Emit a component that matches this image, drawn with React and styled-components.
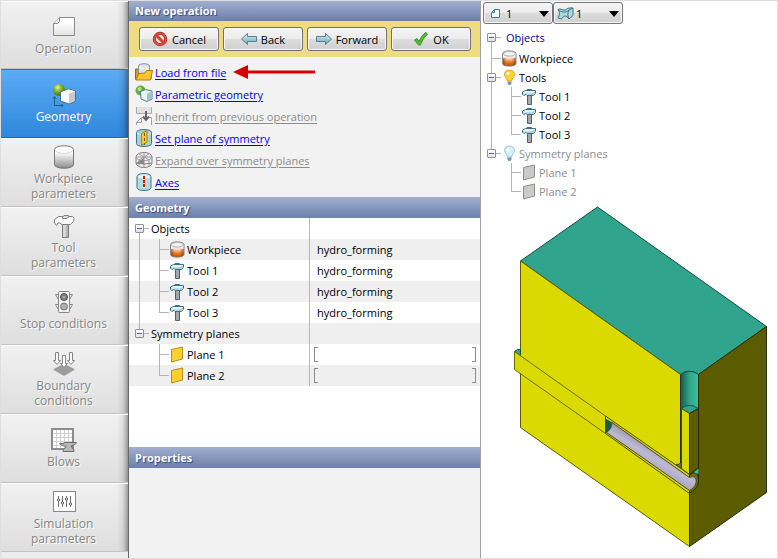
import { useState } from "react";
import styled, { createGlobalStyle } from "styled-components";

const steps = [
  { label: "Operation", icon: <SheetIcon /> },
  { label: "Geometry", icon: <GeometryIcon /> },
  { label: "Workpiece parameters", icon: <CylinderIcon /> },
  { label: "Tool parameters", icon: <BigHammerIcon /> },
  { label: "Stop conditions", icon: <TrafficIcon /> },
  { label: "Boundary conditions", icon: <BoundaryIcon /> },
  { label: "Blows", icon: <BlowsIcon /> },
  { label: "Simulation parameters", icon: <SlidersIcon /> },
];

const actions = [
  { label: "Load from file", icon: <FolderIcon />, arrow: true },
  { label: "Parametric geometry", icon: <ParametricIcon /> },
  { label: "Inherit from previous operation", icon: <InheritIcon />, disabled: true },
  { label: "Set plane of symmetry", icon: <SymmetryIcon /> },
  { label: "Expand over symmetry planes", icon: <ExpandIcon />, disabled: true },
  { label: "Axes", icon: <AxesIcon /> },
];

const geometryRows = [
  { label: "Objects", box: "first" },
  { label: "Workpiece", icon: <WorkpieceIcon />, guides: ["line", "tee"], value: "hydro_forming" },
  { label: "Tool 1", icon: <HammerIcon />, guides: ["line", "tee"], value: "hydro_forming" },
  { label: "Tool 2", icon: <HammerIcon />, guides: ["line", "tee"], value: "hydro_forming" },
  { label: "Tool 3", icon: <HammerIcon />, guides: ["line", "elbow"], value: "hydro_forming" },
  { label: "Symmetry planes", box: "last" },
  { label: "Plane 1", icon: <PlaneIcon />, guides: ["none", "tee"], range: true },
  { label: "Plane 2", icon: <PlaneIcon />, guides: ["none", "elbow"], range: true },
];

const sceneRows = [
  { label: "Workpiece", icon: <WorkpieceIcon />, guides: ["tee"] },
  { label: "Tools", icon: <BulbIcon on />, box: "middle" },
  { label: "Tool 1", icon: <HammerIcon />, guides: ["line", "tee"] },
  { label: "Tool 2", icon: <HammerIcon />, guides: ["line", "tee"] },
  { label: "Tool 3", icon: <HammerIcon />, guides: ["line", "elbow"] },
  { label: "Symmetry planes", icon: <BulbIcon />, box: "last", muted: true },
  { label: "Plane 1", icon: <PlaneIcon muted />, guides: ["none", "tee"], muted: true },
  { label: "Plane 2", icon: <PlaneIcon muted />, guides: ["none", "elbow"], muted: true },
];

export default function App() {
  const [step, setStep] = useState("Geometry");

  return (
    <>
      <GlobalStyle />
      <Page>
        <Sidebar>
          {steps.map(({ label, icon }) => (
            <Step
              key={label}
              type="button"
              $active={label === step}
              onClick={() => setStep(label)}
            >
              <StepIcon>{icon}</StepIcon>
              <StepLabel>{label}</StepLabel>
            </Step>
          ))}
        </Sidebar>

        <Panel>
          <PanelHeading>New operation</PanelHeading>
          <ButtonBar>
            <BarButton type="button">
              <CancelIcon />
              Cancel
            </BarButton>
            <BarButton type="button">
              <ArrowIcon />
              Back
            </BarButton>
            <BarButton type="button">
              <ArrowIcon forward />
              Forward
            </BarButton>
            <BarButton type="button">
              <CheckIcon />
              OK
            </BarButton>
          </ButtonBar>

          <ActionList>
            {actions.map(({ label, icon, disabled, arrow }) => (
              <ActionItem key={label}>
                {icon}
                <ActionLink href="#" aria-disabled={disabled} $disabled={disabled}>
                  {label}
                </ActionLink>
                {arrow ? <PointerArrow /> : null}
              </ActionItem>
            ))}
          </ActionList>

          <PanelHeading>Geometry</PanelHeading>
          <TableArea>
            <Table>
              <tbody>
                {geometryRows.map((row) => (
                  <tr key={row.label}>
                    <NameCell>
                      <TreeRow row={row} />
                    </NameCell>
                    <ValueCell $range={row.range}>
                      {row.range ? (
                        <Range>
                          <Bracket />
                          <Bracket $right />
                        </Range>
                      ) : (
                        row.value
                      )}
                    </ValueCell>
                  </tr>
                ))}
              </tbody>
            </Table>
          </TableArea>

          <PanelHeading>Properties</PanelHeading>
          <PropertiesBody />
        </Panel>

        <Viewport>
          <Toolbar>
            <Picker>
              <SmallSheetIcon />
              <PickerSelect aria-label="Operation number" defaultValue="1">
                <option>1</option>
              </PickerSelect>
              <Caret />
            </Picker>
            <Picker $tight>
              <BlowShapeIcon />
              <PickerSelect aria-label="Blow number" defaultValue="1">
                <option>1</option>
              </PickerSelect>
              <Caret />
            </Picker>
          </Toolbar>
          <SceneRoot>
            <Guide $type="first">
              <Expander />
            </Guide>
            <RootLabel>Objects</RootLabel>
          </SceneRoot>
          <SceneTree>
            {sceneRows.map((row) => (
              <SceneItem key={row.label}>
                <TreeRow row={row} />
              </SceneItem>
            ))}
          </SceneTree>
          <Model />
        </Viewport>
      </Page>
    </>
  );
}

function TreeRow({ row }) {
  return (
    <TreeLine>
      {row.box ? (
        <Guide $type={row.box}>
          <Expander />
        </Guide>
      ) : (
        row.guides.map((type, index) => <Guide key={index} $type={type} />)
      )}
      {row.icon ? <TreeIcon>{row.icon}</TreeIcon> : null}
      <TreeLabel $muted={row.muted}>{row.label}</TreeLabel>
    </TreeLine>
  );
}

function Expander() {
  return (
    <ExpanderButton type="button" aria-label="Collapse">
      <svg width="7" height="7" viewBox="0 0 7 7">
        <path d="M1 3h5v1H1z" fill="#4a62a8" />
      </svg>
    </ExpanderButton>
  );
}

/* Step icons */

function SheetIcon() {
  return (
    <svg width="24" height="24" viewBox="0 0 24 24">
      <defs>
        <linearGradient id="sheet" x2="0" y2="1">
          <stop offset="0.3" stopColor="#fff" />
          <stop offset="1" stopColor="#e2e2e2" />
        </linearGradient>
      </defs>
      <path d="M7.5 2.5H22.5V20.5H1.5V8.5Z" fill="url(#sheet)" stroke="#8a8a8a" />
      <path d="M7.5 2.5V6.5L5.5 8.5H1.5" fill="#eee" stroke="#8a8a8a" />
    </svg>
  );
}

function GeometryIcon() {
  return (
    <svg width="24" height="24" viewBox="0 0 24 24">
      <defs>
        <radialGradient id="ball" cx="0.4" cy="0.3" r="0.7">
          <stop offset="0" stopColor="#e4f59a" />
          <stop offset="0.45" stopColor="#86b52c" />
          <stop offset="1" stopColor="#3e7408" />
        </radialGradient>
      </defs>
      <circle cx="7" cy="7" r="6" fill="url(#ball)" />
      <path d="M8.500 9L16.500 6L23.500 8V18L17 21L8.500 18Z" fill="#fff" stroke="#4c707c" />
      <path d="M17 10.500V20.500L23 17.700V8.500Z" fill="#c9c9c9" />
      <path d="M9 9.300L16.500 6.500L23 8.300L17 10.500Z" fill="#f4f4f4" />
      <path d="M2.500 14V22.500H11M1 15.500L2.500 13.500L4 15.500M9.500 21L11 22.500L9.500 24" fill="none" stroke="#1f5e78" />
    </svg>
  );
}

function CylinderIcon() {
  return (
    <svg width="24" height="24" viewBox="0 0 24 24">
      <defs>
        <linearGradient id="cylinder" x2="0" y2="1">
          <stop offset="0.3" stopColor="#fff" />
          <stop offset="1" stopColor="#8b8b8b" />
        </linearGradient>
      </defs>
      <path d="M2.500 4.500C2.500 -0.500 21.500 -0.500 21.500 4.500V19.500C21.500 24.500 2.500 24.500 2.500 19.500Z" fill="url(#cylinder)" stroke="#777" />
      <path d="M3 5C4 9.500 20 9.500 21 5" fill="none" stroke="#d5d5d5" />
    </svg>
  );
}

function BigHammerIcon() {
  return (
    <svg width="24" height="24" viewBox="0 0 24 24">
      <path d="M10.500 10V23.500H16.500V10Z" fill="#d6d6d6" stroke="#7d7d7d" />
      <path d="M14 11H16V23H14Z" fill="#b5b5b5" />
      <path d="M6.500 2.500H20C22.500 2.500 22 6 21.500 7.500L18.500 10.500H10L8 9H6L4.500 11.500L2.500 9V5.500Z" fill="#fafafa" stroke="#808080" />
      <path d="M10.500 3L12 1.500H16.500V3L15 4.500H10.500Z" fill="#ddd" stroke="#808080" />
    </svg>
  );
}

function TrafficIcon() {
  return (
    <svg width="24" height="24" viewBox="0 0 24 24">
      <path d="M3.500 4.500H7V9H6Z M20.500 4.500H17V9H18Z M3.500 14.500H7V19H6Z M20.500 14.500H17V19H18Z" fill="#f4f4f4" stroke="#888" />
      <rect x="6.500" y="1.500" width="11" height="21" rx="1" fill="#f2f2f2" stroke="#858585" />
      <circle cx="12" cy="7" r="3.500" fill="#777" stroke="#555" />
      <circle cx="12" cy="7" r="1.500" fill="#aaa" />
      <circle cx="12" cy="16.500" r="3.500" fill="#b0b0b0" stroke="#777" />
    </svg>
  );
}

function BoundaryIcon() {
  return (
    <svg width="24" height="24" viewBox="0 0 24 24">
      <path d="M1 17.500L12 11.500L23 17.500L12 24Z" fill="#9c9c9c" />
      <g fill="#fff" stroke="#868686">
        <path d="M3.500 0.500H6.500V8.500H8.500L5 12.500L1.500 8.500H3.500Z" />
        <path d="M17.500 0.500H20.500V8.500H22.500L19 12.500L15.500 8.500H17.500Z" />
        <path d="M10.500 3.500H13.500V11.500H15.500L12 15.500L8.500 11.500H10.500Z" />
      </g>
    </svg>
  );
}

function BlowsIcon() {
  return (
    <svg width="26" height="24" viewBox="0 0 26 24">
      <rect x="1" y="1" width="21" height="20" fill="#fff" stroke="#8c8c8c" strokeWidth="2" />
      <path d="M5.500 2V20M9.500 2V20M13.500 2V20M17.500 2V20M2 5.500H21M2 9.500H21M2 13.500H21M2 17.500H21" stroke="#d2d2d2" />
      <path d="M8.500 15.500H13V14.500H25.500C24.500 17 22 17 20.500 17.500V19L23 22V23.500H12V22L15 19V18C12 18 10 17.500 8.500 15.500Z" fill="#b8b8b8" stroke="#6f6f6f" />
    </svg>
  );
}

function SlidersIcon() {
  return (
    <svg width="24" height="24" viewBox="0 0 24 24">
      <rect x="1.500" y="1.500" width="22" height="20" fill="#fdfdfd" stroke="#878787" />
      <path d="M6.500 6V17M10.500 6V17M14.500 6V17M18.500 6V17" stroke="#707070" />
      <g fill="#fff" stroke="#555">
        <circle cx="6.500" cy="10" r="1.200" />
        <circle cx="10.500" cy="13" r="1.200" />
        <circle cx="14.500" cy="9" r="1.200" />
        <circle cx="18.500" cy="14" r="1.200" />
      </g>
    </svg>
  );
}

/* Button icons */

function CancelIcon() {
  return (
    <svg width="16" height="16" viewBox="0 0 16 16">
      <circle cx="8" cy="8" r="5.700" fill="#f1dcd8" stroke="#8e2a20" strokeWidth="3" />
      <circle cx="8" cy="8" r="5.700" fill="none" stroke="#dd4a3b" strokeWidth="2" />
      <path d="M4 4L12 12" stroke="#d23f32" strokeWidth="3" />
    </svg>
  );
}

function ArrowIcon({ forward }) {
  return (
    <svg width="16" height="16" viewBox="0 0 16 16">
      <defs>
        <linearGradient id="arrow" x2="0" y2="1">
          <stop offset="0" stopColor="#e2f3f4" />
          <stop offset="1" stopColor="#5fa6b2" />
        </linearGradient>
      </defs>
      <path
        d={forward ? "M0.500 5.500H9.500V2.500L15.500 8L9.500 13.500V10.500H0.500Z" : "M15.500 5.500H6.500V2.500L0.500 8L6.500 13.500V10.500H15.500Z"}
        fill="url(#arrow)"
        stroke="#54818f"
      />
    </svg>
  );
}

function CheckIcon() {
  return (
    <svg width="16" height="16" viewBox="0 0 16 16">
      <path d="M1.500 9L4 7.500L6 10.500C8 6 10 3 13 1.500L14.500 3.500C11 6 9 10 7.500 14H5.500Z" fill="#55b83c" stroke="#3a9a2a" />
    </svg>
  );
}

/* Action icons */

function FolderIcon() {
  return (
    <svg width="18" height="18" viewBox="0 0 18 18">
      <path d="M0.500 16.500V6H6L7 8H16V16Z" fill="#d9971c" stroke="#9b6b12" />
      <path d="M3.500 3C3.500 0 14.500 0 14.500 3V11H3.500Z" fill="#dfe3e6" stroke="#82929b" />
      <path d="M4 4C5 6 13 6 14 4" fill="none" stroke="#fff" />
      <path d="M1 17L4 10.500L10 10L11.500 7.500H17.500L15.500 17Z" fill="#fbc62b" stroke="#b37d12" />
    </svg>
  );
}

function ParametricIcon() {
  return (
    <svg width="18" height="18" viewBox="0 0 18 18">
      <circle cx="5.500" cy="5.500" r="5" fill="#67ad3e" />
      <circle cx="4.500" cy="4" r="2" fill="#b9df9f" />
      <path d="M5.500 6.500L10.500 4.500L17 6V14L12 16.500L6 14Z" fill="#e7f3f5" stroke="#4f7f8c" />
      <path d="M12 8.500V16L16.500 13.500V6.500Z" fill="#9fc5cc" />
    </svg>
  );
}

function InheritIcon() {
  return (
    <svg width="18" height="18" viewBox="0 0 18 18">
      <path d="M1 0V6.500H16.500V0Z" fill="#e2e2e2" />
      <path d="M1.500 0V6.500H16.500V0" fill="none" stroke="#aaa" />
      <path d="M6.500 10.500H16.500V18M1.500 18V15.500L6.500 10.500V15.500H1.500" fill="#fafafa" stroke="#a2a2a2" />
      <path d="M11 4V12M8 9.500L11 13L14 9.500" fill="none" stroke="#666" strokeWidth="2" />
    </svg>
  );
}

function SymmetryIcon() {
  return (
    <svg width="18" height="18" viewBox="0 0 18 18">
      <path d="M1.500 3.500C1.500 -0.500 16.500 -0.500 16.500 3.500V14.500C16.500 18.500 1.500 18.500 1.500 14.500Z" fill="#a9d0d6" stroke="#39788a" />
      <path d="M2 4C4 6.500 14 6.500 16 4" fill="none" stroke="#dff0f2" />
      <path d="M6.500 4.500L12 1.500V13L6.500 16.500Z" fill="#fdc62f" stroke="#a97e1b" />
      <path d="M9.500 4V16" stroke="#7a5a16" strokeDasharray="3 2" />
    </svg>
  );
}

function ExpandIcon() {
  return (
    <svg width="18" height="18" viewBox="0 0 18 18">
      <path d="M1 6C1 0 17 0 17 6V12C17 18 1 18 1 12Z" fill="#f0f0f0" stroke="#808080" />
      <path d="M1 6C2 11 16 11 17 6M1 6H17M9 1.500V17M4 3L14 9M14 3L4 9M4 9V15M14 9V15" fill="none" stroke="#9a9a9a" />
      <path d="M1 12L9 7V13Z" fill="#8a8a8a" />
      <path d="M1 12L9 13L17 12" fill="none" stroke="#808080" />
    </svg>
  );
}

function AxesIcon() {
  return (
    <svg width="18" height="18" viewBox="0 0 18 18">
      <path d="M2 3.500C2 -0.500 16 -0.500 16 3.500V14.500C16 18.500 2 18.500 2 14.500Z" fill="#b8d9de" stroke="#39788a" />
      <ellipse cx="9" cy="3.500" rx="6" ry="2" fill="#eaf6f7" />
      <path d="M9 3V15" stroke="#c91d12" strokeWidth="2" strokeDasharray="3 1" />
    </svg>
  );
}

function PointerArrow() {
  return (
    <PointerSvg width="82" height="16" viewBox="0 0 82 16">
      <path d="M0 8L15 1V6.500H82V9.500H15V15Z" fill="#d20000" />
    </PointerSvg>
  );
}

/* Tree icons */

function WorkpieceIcon() {
  return (
    <svg width="15" height="17" viewBox="0 0 15 17">
      <defs>
        <linearGradient id="hot" x2="0" y2="1">
          <stop offset="0.300" stopColor="#fff" />
          <stop offset="0.500" stopColor="#f5d3bd" />
          <stop offset="0.750" stopColor="#ea7a22" />
          <stop offset="1" stopColor="#b44c08" />
        </linearGradient>
        <linearGradient id="hotSide">
          <stop offset="0" stopColor="#7c3100" stopOpacity="0.600" />
          <stop offset="0.300" stopColor="#7c3100" stopOpacity="0" />
          <stop offset="0.700" stopColor="#7c3100" stopOpacity="0" />
          <stop offset="1" stopColor="#7c3100" stopOpacity="0.600" />
        </linearGradient>
      </defs>
      <path d="M0.500 3.500C0.500 0 14 0 14 3.500V13.500C14 17 0.500 17 0.500 13.500Z" fill="url(#hot)" stroke="#8f8078" />
      <path d="M1 8H13.500V13.500C13.500 16.500 1 16.500 1 13.500Z" fill="url(#hotSide)" />
      <ellipse cx="7.250" cy="3.800" rx="6" ry="2.300" fill="#f3f5f6" stroke="#aab4b8" />
    </svg>
  );
}

function HammerIcon() {
  return (
    <svg width="15" height="17" viewBox="0 0 15 17">
      <path d="M5.500 6V16.500H9.500V6Z" fill="#a3a7aa" stroke="#4f616b" />
      <path d="M3.500 2.500H13.500V5L11.500 7.500H5.500L4 6.500H3L2.500 7.500L0.500 6.500V4Z" fill="#e6f3f6" stroke="#397587" />
      <path d="M1 5.500H10L13 3.500V5L11 7H6L4 6L2.500 7L1 6.500Z" fill="#a9cbd4" />
      <path d="M5 1.500H9.500V2.500H5Z" fill="#7fa4b0" stroke="#397587" />
    </svg>
  );
}

function PlaneIcon({ muted }) {
  return (
    <svg width="15" height="17" viewBox="0 0 15 17">
      <path d="M1.500 3.500L12.500 1V13L1.500 16Z" fill={muted ? "#cacaca" : "#ffd02c"} stroke={muted ? "#8c8c8c" : "#b58b25"} />
    </svg>
  );
}

function BulbIcon({ on }) {
  return (
    <svg width="15" height="17" viewBox="0 0 15 17">
      <path d="M7.500 1C4 1 2.500 3.500 2.500 5.500C2.500 8 5 9 5.500 12H9.500C10 9 12.500 8 12.500 5.500C12.500 3.500 11 1 7.500 1Z" fill={on ? "#ffd22e" : "#d8f0f6"} stroke={on ? "#dda620" : "#9cc6d2"} />
      <circle cx="6" cy="4.500" r="1.500" fill="#fff" />
      <path d="M5.500 12.500H9.500V14.500L8.500 16H6.500L5.500 14.500Z" fill={on ? "#8391a5" : "#6f98a6"} />
    </svg>
  );
}

/* Toolbar icons */

function SmallSheetIcon() {
  return (
    <svg width="9" height="9" viewBox="0 0 9 9">
      <path d="M3.500 0.500H8.500V8.500H0.500V3.500Z" fill="#f5fafb" stroke="#3c7f8e" />
      <path d="M3.500 1V3.500H1" fill="none" stroke="#3c7f8e" />
    </svg>
  );
}

function BlowShapeIcon() {
  return (
    <svg width="17" height="13" viewBox="0 0 17 13">
      <path d="M1 2.500C3 1 5 3 7 3C10 3 10 1 12 1H16V8.500L12 12C9 8 7 8 4.500 12L1 11C3 8 3 5 1 2.500Z" fill="#aed8dd" stroke="#34798b" />
      <path d="M1 2.500C4 5.500 9 6 12 3L16 1M12 3C10.500 6 10.500 9 12 12" fill="none" stroke="#34798b" />
    </svg>
  );
}

function Caret() {
  return (
    <CaretSvg width="10" height="6" viewBox="0 0 10 6">
      <path d="M0 0H10L5 6Z" fill="#000" />
    </CaretSvg>
  );
}

/* Die block with the formed tube and punches */
function Model() {
  return (
    <ModelSvg width="258" height="348" viewBox="510 201 258 348" role="img" aria-label="Hydroforming model">
      <defs>
        <linearGradient id="bore">
          <stop offset="0" stopColor="#17594b" />
          <stop offset="0.500" stopColor="#2fa58c" />
          <stop offset="1" stopColor="#3bc0a5" />
        </linearGradient>
        <linearGradient id="tube" gradientUnits="userSpaceOnUse" x1="648" y1="443" x2="638" y2="460">
          <stop offset="0" stopColor="#9a96ae" />
          <stop offset="0.500" stopColor="#bebad3" />
          <stop offset="1" stopColor="#aaa6c0" />
        </linearGradient>
      </defs>
      <g strokeWidth="1" strokeLinejoin="round">
        <path d="M597.500 207L766.500 326.500L698.500 374.500Q689.500 368 680.500 374.500L520.500 261Z" fill="#30a48c" stroke="#174e43" />
        <path d="M520.500 261L680.500 374.500L689.500 380V546.500L520.500 427.500Z" fill="#dada00" stroke="#5c5c00" />
        <path d="M766.500 326.500V492.500L689.500 546.500V380L698.500 374.500Z" fill="#5b5b00" stroke="#2b2b00" />
        <path d="M514.500 351.500L517.500 349.500H520.500V356Z" fill="#30a48c" stroke="#174e43" />
        <path d="M605.500 416L514.500 351.500V369.500L605.500 433.500" fill="#dada00" stroke="#6c6c00" />
        <path d="M605.500 416L689.500 474.500V493.500L605.500 433.500Z" fill="#dada00" stroke="#4c4c00" />
        <path d="M605.500 418.500L612 422.500L611 428L606.500 433H605.500Z" fill="#17594b" />
        <path d="M689.500 475C696 470 698.500 474 698.500 481C698.500 486 694 491 689.500 493Z" fill="#6d6d00" stroke="#2b2b00" />
        <path d="M612 422.500L689.500 477.500C694 475 697 478 696 483C695 487 692 489 689.500 490.500L606.500 432.500Q612 429 612 422.500Z" fill="url(#tube)" stroke="#4c4c24" />
        <path d="M676 464.500Q679 465 681 462.500V468Z" fill="#777288" stroke="#4c4c24" />
        <path d="M680.500 374.500Q689.500 368 698.500 374.500V409H680.500Z" fill="url(#bore)" />
        <path d="M680.500 374.500Q689.500 368 698.500 374.500" fill="none" stroke="#174e43" />
        <path d="M680.500 374.500V463M698.500 374.500V480" stroke="#2b2b00" />
        <path d="M681.500 408.500Q689.500 402 698 408.500L689.500 413.500Z" fill="#30a48c" stroke="#174e43" />
        <path d="M681.500 408.500L689.500 413.500V474.500L681.500 468.500Z" fill="#dada00" stroke="#4c4c00" />
        <path d="M698.500 408.500L689.500 413.500V474.500L698.500 467.500Z" fill="#5b5b00" stroke="#2b2b00" />
        <path d="M698.500 468.500V474L694 472.500Z" fill="#3bc0a5" />
      </g>
    </ModelSvg>
  );
}

const GlobalStyle = createGlobalStyle`
  body {
    margin: 0;
    background-color: #fff;
    color: #000;
    font-family: "Open Sans", "Noto Sans", sans-serif;
    font-size: 11px;
    line-height: 15px;
  }

  button, select {
    font: inherit;
    color: inherit;
  }

  svg {
    display: block;
    flex-shrink: 0;
  }
`;

const Page = styled.div`
  box-sizing: border-box;
  display: grid;
  grid-template-columns: 128px 352px 1fr;
  min-height: 100vh;
  border: 1px solid #dedede;
`;

const Sidebar = styled.nav`
  display: flex;
  flex-direction: column;
  background-color: #ececec;
  border-right: 1px solid #686868;
`;

const Step = styled.button`
  box-sizing: border-box;
  flex: 0 0 69px;
  display: flex;
  flex-direction: column;
  align-items: center;
  justify-content: center;
  gap: 2px;
  padding: 0 2px 0 0;
  border: 0;
  border-top: 1px solid ${({ $active }) => ($active ? "#2d72b5" : "#fdfdfd")};
  border-bottom: 1px solid ${({ $active }) => ($active ? "#2368ab" : "#c2c2c2")};
  color: ${({ $active }) => ($active ? "#fff" : "#858585")};
  text-shadow: ${({ $active }) => ($active ? "none" : "1px 1px 0 #fff")};
  background:
    linear-gradient(to left, rgba(0, 0, 0, 0.35), rgba(0, 0, 0, 0.08) 5px, transparent 11px),
    ${({ $active }) =>
      $active
        ? "linear-gradient(#5cabf5, #2f88dc)"
        : "linear-gradient(#f1f1f1, #dedede)"};

  &:first-child {
    flex-basis: 68px;
  }
`;

const StepIcon = styled.span`
  display: flex;
  justify-content: center;
  height: 24px;
`;

const StepLabel = styled.span`
  width: 90px;
  font-size: 12px;
  text-align: center;
`;

const Panel = styled.main`
  display: flex;
  flex-direction: column;
  border-right: 1px solid #a0a0a0;
  background-color: #f2f2f2;
`;

const PanelHeading = styled.h2`
  margin: 0;
  padding: 3px 6px;
  color: #fff;
  font-size: 11px;
  font-weight: 700;
  line-height: 15px;
  text-shadow: 1px 1px 1px #33487c;
  background: linear-gradient(#a1afcf, #6d7fab);

  &:first-child {
    padding: 2px 6px 3px;
  }
`;

const ButtonBar = styled.div`
  display: flex;
  gap: 4px;
  padding: 6px 10px;
  background-color: #eddc82;
`;

const BarButton = styled.button`
  box-sizing: border-box;
  display: flex;
  flex: 0 0 80px;
  align-items: center;
  justify-content: center;
  gap: 4px;
  height: 24px;
  padding: 0;
  border: 1px solid #707070;
  border-radius: 3px;
  background: linear-gradient(#f4f4f4, #ebebeb 50%, #dcdcdc 50%, #d0d0d0);
  box-shadow: inset 0 0 0 1px #f8f8f8;
`;

const ActionList = styled.ul`
  margin: 0;
  padding: 4px 6px;
  list-style: none;
`;

const ActionItem = styled.li`
  display: flex;
  align-items: center;
  gap: 2px;
  height: 22px;
`;

const ActionLink = styled.a`
  color: ${({ $disabled }) => ($disabled ? "#8c8c8c" : "#0000f0")};
  text-decoration: underline;
  text-underline-offset: 2px;
`;

const PointerSvg = styled.svg`
  margin-left: 5px;
`;

const TableArea = styled.div`
  min-height: 229px;
  background-color: #fff;
`;

const Table = styled.table`
  width: 100%;
  table-layout: fixed;
  border-collapse: separate;
  border-spacing: 0;

  tr:nth-child(even) {
    background-color: #efefef;
  }
`;

const NameCell = styled.td`
  width: 180px;
  height: 21px;
  padding: 0;
`;

const ValueCell = styled.td`
  padding: 0 ${({ $range }) => ($range ? "4px" : "7px")};
  border-left: 1px solid #b8b8b8;
`;

const Range = styled.div`
  display: flex;
  justify-content: space-between;
`;

const Bracket = styled.span`
  width: 3px;
  height: 13px;
  border: 1px solid #8c8c8c;
  ${({ $right }) => ($right ? "border-left: 0;" : "border-right: 0;")}
`;

const TreeLine = styled.div`
  display: flex;
  align-items: center;
  height: 100%;
  min-height: 19px;

  td > & {
    height: 21px;
  }
`;

const line = "linear-gradient(#b4b4b4, #b4b4b4) no-repeat";

const guideBackgrounds = {
  none: "none",
  line: `${line} 10px 0 / 1px 100%`,
  tee: `${line} 10px 0 / 1px 100%, ${line} 10px 50% / 10px 1px`,
  elbow: `${line} 10px 0 / 1px 50%, ${line} 10px 50% / 10px 1px`,
  first: `${line} 10px 100% / 1px 50%, ${line} 10px 50% / 10px 1px`,
  middle: `${line} 10px 0 / 1px 100%, ${line} 10px 50% / 10px 1px`,
  last: `${line} 10px 0 / 1px 50%, ${line} 10px 50% / 10px 1px`,
};

const Guide = styled.span`
  box-sizing: border-box;
  display: flex;
  align-items: center;
  align-self: stretch;
  flex: 0 0 20px;
  padding-left: 6px;
  background: ${({ $type }) => guideBackgrounds[$type]};
`;

const ExpanderButton = styled.button`
  box-sizing: border-box;
  width: 9px;
  height: 9px;
  padding: 0;
  border: 1px solid #919191;
  border-radius: 1px;
  background: linear-gradient(#fff, #e0e0e0);
`;

const TreeIcon = styled.span`
  padding-left: 1px;
`;

const TreeLabel = styled.span`
  padding-left: 2px;
  color: ${({ $muted }) => ($muted ? "#8c8c8c" : "#000")};
`;

const PropertiesBody = styled.div`
  flex: 1;
`;

const Viewport = styled.section`
  min-width: 0;
  overflow: hidden;
  background-color: #fff;
`;

const Toolbar = styled.div`
  display: flex;
  padding: 1px 2px;
`;

const Picker = styled.label`
  position: relative;
  box-sizing: border-box;
  display: flex;
  align-items: center;
  gap: ${({ $tight }) => ($tight ? "2px" : "6px")};
  width: 70px;
  height: 22px;
  padding-left: ${({ $tight }) => ($tight ? "3px" : "7px")};
  border: 1px solid #777;
  border-radius: 3px;
  background: linear-gradient(#f4f4f4, #ebebeb 50%, #dcdcdc 50%, #d0d0d0);
  box-shadow: inset 0 0 0 1px #f4f4f4;
`;

const PickerSelect = styled.select`
  flex: 1;
  min-width: 0;
  padding: 0;
  border: 0;
  appearance: none;
  background: transparent;
`;

const CaretSvg = styled.svg`
  position: absolute;
  right: 3px;
  top: 8px;
  pointer-events: none;
`;

const SceneRoot = styled.div`
  display: flex;
  align-items: center;
  height: 24px;
`;

const RootLabel = styled.span`
  padding-left: 5px;
  color: #00009c;
`;

const SceneTree = styled.ul`
  margin: 0;
  padding: 0;
  list-style: none;
`;

const SceneItem = styled.li`
  height: 19px;
`;

const ModelSvg = styled.svg`
  margin-left: 29px;
`;
